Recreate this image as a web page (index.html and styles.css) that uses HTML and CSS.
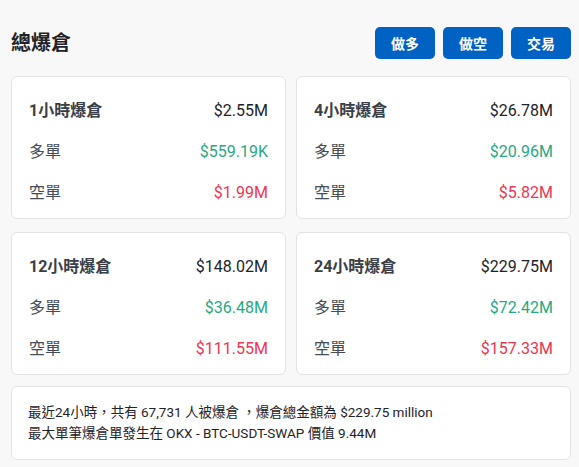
FILE: index.html
```html
<!DOCTYPE html>
<html lang="zh-Hant">
<head>
<meta charset="utf-8">
<link rel="stylesheet" href="styles.css">
</head>
<body>
<div class="page">
  <div class="header">
    <h1 class="title">總爆倉</h1>
    <div class="actions">
      <button class="btn">做多</button>
      <button class="btn">做空</button>
      <button class="btn">交易</button>
    </div>
  </div>
  <div class="grid">
    <div class="card">
      <div class="row head"><span>1小時爆倉</span><span class="val">$2.55M</span></div>
      <div class="row"><span>多單</span><span class="long">$559.19K</span></div>
      <div class="row"><span>空單</span><span class="short">$1.99M</span></div>
    </div>
    <div class="card">
      <div class="row head"><span>4小時爆倉</span><span class="val">$26.78M</span></div>
      <div class="row"><span>多單</span><span class="long">$20.96M</span></div>
      <div class="row"><span>空單</span><span class="short">$5.82M</span></div>
    </div>
    <div class="card">
      <div class="row head"><span>12小時爆倉</span><span class="val">$148.02M</span></div>
      <div class="row"><span>多單</span><span class="long">$36.48M</span></div>
      <div class="row"><span>空單</span><span class="short">$111.55M</span></div>
    </div>
    <div class="card">
      <div class="row head"><span>24小時爆倉</span><span class="val">$229.75M</span></div>
      <div class="row"><span>多單</span><span class="long">$72.42M</span></div>
      <div class="row"><span>空單</span><span class="short">$157.33M</span></div>
    </div>
  </div>
  <div class="summary">
    <p>最近24小時，共有 67,731 人被爆倉 ，爆倉總金額為 $229.75 million</p>
    <p>最大單筆爆倉單發生在 OKX - BTC-USDT-SWAP 價值 9.44M</p>
  </div>
</div>
</body>
</html>
```

FILE: styles.css
```css
html, body {
  margin: 0;
  padding: 0;
  background: #f8f8f8;
}
body {
  font-family: Roboto, "Noto Sans CJK TC", sans-serif;
  color: #1e2329;
}
.page {
  padding: 27px 8px 0 11px;
}
.header {
  display: flex;
  align-items: center;
  justify-content: space-between;
  height: 32px;
}
.title {
  margin: 0;
  font-size: 20px;
  font-weight: 700;
  color: #1e2329;
  line-height: 32px;
}
.actions {
  display: flex;
  gap: 8px;
}
.btn {
  width: 60px;
  height: 32px;
  border: 0;
  border-radius: 5px;
  background: #0062c3;
  color: #fff;
  font-family: Roboto, "Noto Sans CJK TC", sans-serif;
  font-size: 14px;
  font-weight: 700;
  padding: 0;
}
.grid {
  margin-top: 17px;
  display: grid;
  grid-template-columns: 1fr 1fr;
  column-gap: 10px;
  row-gap: 13px;
}
.card {
  background: #fff;
  border: 1px solid #e3e3e3;
  border-radius: 6px;
  height: 143px;
  box-sizing: border-box;
  padding: 13px 17px 6px 17px;
}
.row {
  display: flex;
  justify-content: space-between;
  align-items: center;
  height: 41px;
  font-size: 16px;
  line-height: 20px;
  color: #474d57;
}
.row span {
  display: block;
  height: 20px;
  line-height: 20px;
}
.row.head {
  font-weight: 700;
  color: #3a3f47;
}
.row .val {
  font-weight: 400;
  color: #1e2329;
}
.long {
  color: #27a981;
}
.short {
  color: #ef3552;
}
.summary {
  margin-top: 11px;
  background: #fff;
  border: 1px solid #e3e3e3;
  border-radius: 6px;
  box-sizing: border-box;
  height: 74px;
  padding: 15px 16px;
  font-size: 13.5px;
  line-height: 21px;
  color: #1e2329;
}
.summary p {
  margin: 0;
}
```
